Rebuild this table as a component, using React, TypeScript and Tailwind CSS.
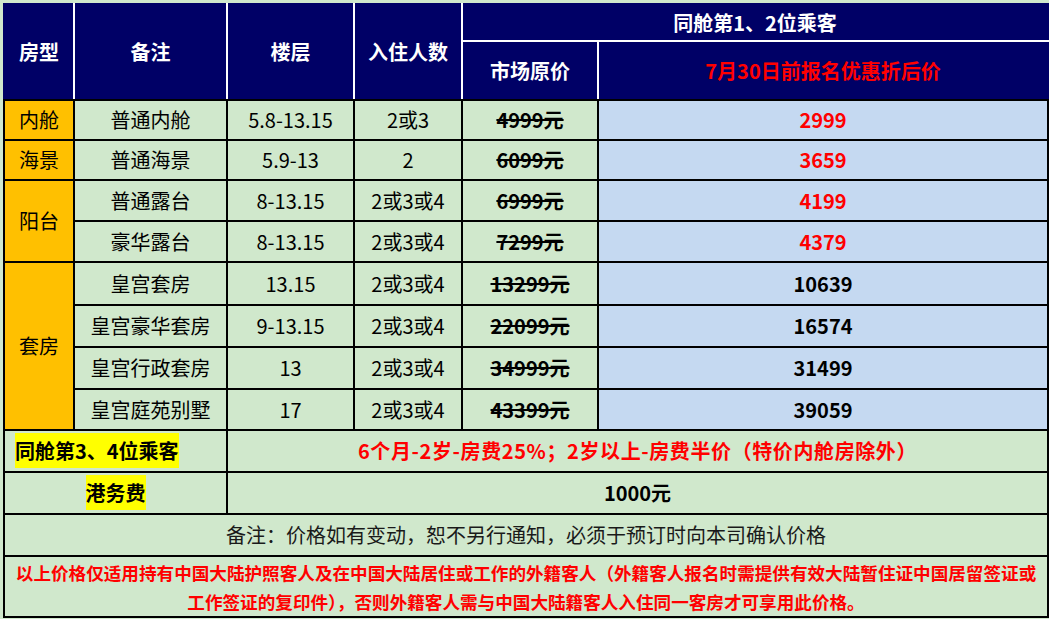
import React from 'react'

type Row = {
  type?: string
  span?: number
  note: string
  floor: string
  people: string
  original: string
  price: string
  red: boolean
  h: string
}

const rows: Row[] = [
  { type: '内舱', span: 1, note: '普通内舱', floor: '5.8-13.15', people: '2或3', original: '4999元', price: '2999', red: true, h: 'h-[40px]' },
  { type: '海景', span: 1, note: '普通海景', floor: '5.9-13', people: '2', original: '6099元', price: '3659', red: true, h: 'h-[40px]' },
  { type: '阳台', span: 2, note: '普通露台', floor: '8-13.15', people: '2或3或4', original: '6999元', price: '4199', red: true, h: 'h-[41px]' },
  { note: '豪华露台', floor: '8-13.15', people: '2或3或4', original: '7299元', price: '4379', red: true, h: 'h-[41px]' },
  { type: '套房', span: 4, note: '皇宫套房', floor: '13.15', people: '2或3或4', original: '13299元', price: '10639', red: false, h: 'h-[43px]' },
  { note: '皇宫豪华套房', floor: '9-13.15', people: '2或3或4', original: '22099元', price: '16574', red: false, h: 'h-[42px]' },
  { note: '皇宫行政套房', floor: '13', people: '2或3或4', original: '34999元', price: '31499', red: false, h: 'h-[42px]' },
  { note: '皇宫庭苑别墅', floor: '17', people: '2或3或4', original: '43399元', price: '39059', red: false, h: 'h-[41px]' },
]

const cell = 'border-2 border-black text-center p-0'
const td = `${cell} leading-none`

export default function App() {
  return (
    <div
      className="w-[1049px] h-[619px] bg-[#d0e8cc] pt-[3px] pl-[3px] overflow-hidden"
      style={{ fontFamily: '"Noto Sans CJK SC", "Liberation Sans", sans-serif' }}
    >
      <table className="table-fixed border-collapse w-[1044px] text-[20px] text-black">
        <colgroup>
          <col className="w-[70px]" />
          <col className="w-[153px]" />
          <col className="w-[127px]" />
          <col className="w-[108px]" />
          <col className="w-[136px]" />
          <col className="w-[450px]" />
        </colgroup>
        <thead>
          <tr className="h-[37px] bg-[#000066] text-white font-bold">
            <th rowSpan={2} className="border-2 border-[#000066] border-r-white border-b-black p-0">房型</th>
            <th rowSpan={2} className="border-2 border-[#000066] border-r-white border-b-black p-0">备注</th>
            <th rowSpan={2} className="border-2 border-[#000066] border-r-white border-b-black p-0">楼层</th>
            <th rowSpan={2} className="border-2 border-[#000066] border-r-white border-b-black p-0">入住人数</th>
            <th colSpan={2} className="border-2 border-[#000066] border-b-white p-0">同舱第1、2位乘客</th>
          </tr>
          <tr className="h-[59px] bg-[#000066] font-bold">
            <th className="border-2 border-[#000066] border-r-white border-b-black p-0 text-white">市场原价</th>
            <th className="border-2 border-[#000066] border-b-black p-0 text-[#ff0000]">7月30日前报名优惠折后价</th>
          </tr>
        </thead>
        <tbody>
          {rows.map((r) => (
            <tr key={r.note} className={r.h}>
              {r.type && (
                <td rowSpan={r.span} className={`${td} bg-[#ffc000]`}>
                  {r.type}
                </td>
              )}
              <td className={td}>{r.note}</td>
              <td className={td}>{r.floor}</td>
              <td className={td}>{r.people}</td>
              <td className={`${td} font-bold line-through`}>{r.original}</td>
              <td className={`${td} bg-[#c5d9f1] font-bold ${r.red ? 'text-[#ff0000]' : 'text-black'}`}>{r.price}</td>
            </tr>
          ))}
          <tr className="h-[42px]">
            <td colSpan={2} className={`${td} text-left pl-[10px] font-bold`}>
              <span className="bg-[#ffff00] py-[3px] whitespace-nowrap">同舱第3、4位乘客</span>
            </td>
            <td colSpan={4} className={`${td} font-bold text-[#ff0000] tracking-[0.6px]`}>
              6个月-2岁-房费25%；2岁以上-房费半价（特价内舱房除外）
            </td>
          </tr>
          <tr className="h-[42px]">
            <td colSpan={2} className={`${td} font-bold`}>
              <span className="bg-[#ffff00] py-[3px]">港务费</span>
            </td>
            <td colSpan={4} className={`${td} font-bold`}>1000元</td>
          </tr>
          <tr className="h-[42px]">
            <td colSpan={6} className={`${td} text-[#1a1a1a]`}>
              备注：价格如有变动，恕不另行通知，必须于预订时向本司确认价格
            </td>
          </tr>
          <tr className="h-[61px]">
            <td colSpan={6} className={`${cell} text-[17.6px] leading-[29px] font-bold text-[#ff0000] whitespace-nowrap`}>
              以上价格仅适用持有中国大陆护照客人及在中国大陆居住或工作的外籍客人（外籍客人报名时需提供有效大陆暂住证中国居留签证或
              <br />
              工作签证的复印件），否则外籍客人需与中国大陆籍客人入住同一客房才可享用此价格。
            </td>
          </tr>
        </tbody>
      </table>
    </div>
  )
}
